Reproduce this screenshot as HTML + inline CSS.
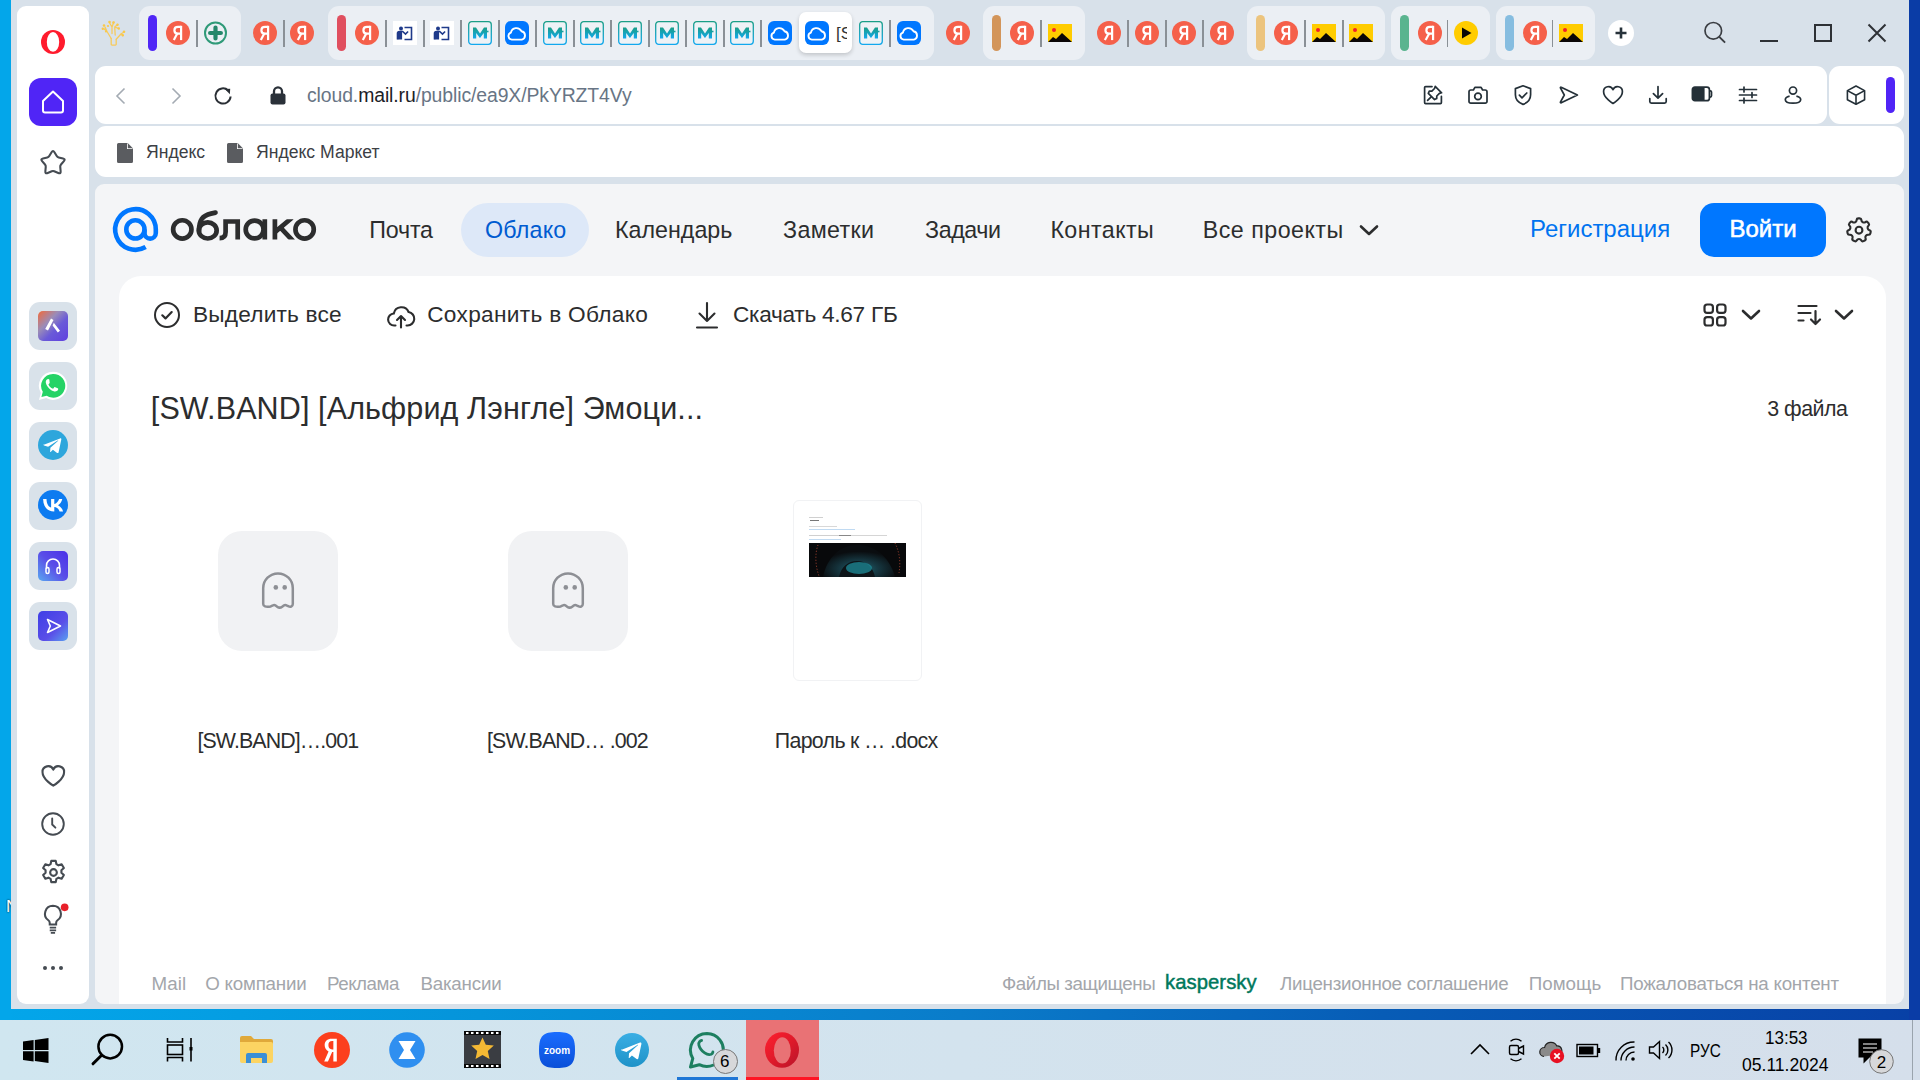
<!DOCTYPE html>
<html><head><meta charset="utf-8">
<style>
*{margin:0;padding:0;box-sizing:border-box}
html,body{width:1920px;height:1080px;overflow:hidden;font-family:"Liberation Sans",sans-serif}
body{position:relative;background:linear-gradient(90deg,#03a6ea 0%,#0594da 25%,#0a7cca 50%,#075cb6 72%,#0840a6 100%)}
.a{position:absolute}
#lwall{left:0;top:0;width:11px;height:1020px;background:#03a6ea}
#rwall{left:1909px;top:0;width:11px;height:1020px;background:#0a3ca6}
#win{left:11px;top:0;width:1898px;height:1009px;background:#d8e1ea}
#side{left:17px;top:6px;width:72px;height:998px;background:#fff;border-radius:9px}
.tile{position:absolute;left:29px;width:48px;height:48px;border-radius:11px;background:#d9e2ea}
.grp{position:absolute;top:6px;height:54px;background:#ebeff4;border-radius:11px}
.bar{position:absolute;top:15px;width:9px;height:36px;border-radius:5px}
.ya{position:absolute;top:21px;width:24px;height:24px;border-radius:50%;background:#f5604a;color:#fff;font:bold 17px/24px "Liberation Sans",sans-serif;text-align:center}
.sep{position:absolute;top:20px;width:2px;height:27px;background:#8a9096}
#addr{left:95px;top:66px;width:1732px;height:58px;background:#fff;border-radius:11px}
#ext{left:1829px;top:66px;width:75px;height:58px;background:#fff;border-radius:11px}
#bm{left:95px;top:126px;width:1809px;height:51px;background:#fff;border-radius:11px}
#page{left:95px;top:184px;width:1809px;height:820px;background:#f4f5f7;border-radius:9px 9px 9px 9px;overflow:hidden}
#card{left:24px;top:92px;width:1767px;height:760px;background:#fff;border-radius:22px 22px 0 0}
#task{left:0;top:1020px;width:1920px;height:60px;background:linear-gradient(90deg,#d0e6f0,#d3e3ee 50%,#d5dfeb)}
.t{position:absolute;white-space:nowrap}
.ic{position:absolute;top:21px}
.nav{top:216.5px;font-size:22.8px;color:#2c2d2e}
.tb{top:302px;font-size:22px;color:#2c2d2e}
.fl{top:729px;font-size:19.85px;color:#2c2d2e}
.ft{top:972px;font-size:18.6px;color:#a3a6ab}
.act{position:absolute;left:799px;top:12px;width:53px;height:41px;background:#fff;border-radius:7px;box-shadow:0 2px 4px rgba(0,0,0,.18)}
</style></head><body>
<div id="lwall" class="a"></div>
<div id="rwall" class="a"></div>
<div id="win" class="a"></div>
<div id="side" class="a"></div>
<!-- opera logo -->
<svg class="a" style="left:41px;top:30px" width="24" height="24" viewBox="0 0 24 24"><ellipse cx="12" cy="12" rx="12" ry="12" fill="#ff1b2d"/><ellipse cx="12" cy="11.9" rx="6.2" ry="9.9" fill="#fff"/></svg>
<!-- home -->
<div class="a" style="left:29px;top:78px;width:48px;height:48px;border-radius:12px;background:#5025f6"></div>
<svg class="a" style="left:41px;top:90px" width="24" height="24" viewBox="0 0 24 24"><path d="M12 1.5l-10 9.4v9.5a2 2 0 0 0 2 2h16a2 2 0 0 0 2-2v-9.5z" fill="none" stroke="#fff" stroke-width="2" stroke-linejoin="round"/></svg>
<!-- star -->
<svg class="a" style="left:39px;top:148px" width="28" height="30" viewBox="0 0 28 30"><path d="M12.56 4.20Q14.00 1.80 15.44 4.20L17.74 8.02Q18.41 9.13 19.67 9.43L24.02 10.43Q26.74 11.06 24.91 13.17L21.99 16.54Q21.13 17.52 21.25 18.81L21.63 23.25Q21.88 26.04 19.30 24.95L15.20 23.21Q14.00 22.70 12.80 23.21L8.70 24.95Q6.12 26.04 6.37 23.25L6.75 18.81Q6.87 17.52 6.01 16.54L3.09 13.17Q1.26 11.06 3.98 10.43L8.33 9.43Q9.59 9.13 10.26 8.02Z" fill="none" stroke="#454b52" stroke-width="2.1" stroke-linejoin="round"/></svg>
<!-- app tiles -->
<div class="tile" style="top:302px"></div>
<div class="tile" style="top:362px"></div>
<div class="tile" style="top:422px"></div>
<div class="tile" style="top:482px"></div>
<div class="tile" style="top:542px"></div>
<div class="tile" style="top:602px"></div>
<svg class="a" style="left:38px;top:311px" width="30" height="30" viewBox="0 0 30 30"><defs><linearGradient id="ag1" x1="0" y1="0" x2="1" y2="1"><stop offset="0" stop-color="#f26a3a"/><stop offset=".35" stop-color="#9a8cb8"/><stop offset=".6" stop-color="#6a5ad8"/><stop offset="1" stop-color="#6040e0"/></linearGradient></defs><rect width="30" height="30" rx="5" fill="url(#ag1)"/><path d="M13 7.5l2.5 1.5-5.5 10.5-2.8-1.4z M15.8 11.8l6.2 8-2.2 1.8-5.2-7.2z" fill="#fff"/></svg>
<svg class="a" style="left:36px;top:369px" width="34" height="34" viewBox="0 0 32 32"><path d="M16 2.5A13.3 13.3 0 0 0 4.6 22.6L2.8 29.2l6.8-1.8A13.3 13.3 0 1 0 16 2.5z" fill="#fff"/><path d="M16 4.6A11.2 11.2 0 0 0 6.4 21.5l-1.3 4.9 5-1.3A11.2 11.2 0 1 0 16 4.6z" fill="#25d366"/><path d="M11.6 9.4c-.5 0-1.2.2-1.6.8-.5.6-1 1.6-.7 3 .6 2.4 2.4 4.8 4.8 6.5 2.2 1.5 4.2 1.6 5.4 1.1.8-.4 1.3-1.2 1.4-1.8.1-.4-.2-.6-.5-.8l-2.3-1.1c-.4-.2-.7-.1-1 .2l-.8 1c-.2.2-.5.3-.8.1-1.5-.7-3-2.1-3.7-3.6-.1-.3 0-.5.2-.7l.7-.8c.2-.3.3-.6.1-.9L12.6 10c-.2-.4-.5-.6-1-.6z" fill="#fff"/></svg>
<svg class="a" style="left:38px;top:430px" width="30" height="30" viewBox="0 0 30 30"><circle cx="15" cy="15" r="15" fill="#2ea6dc"/><path d="M6.5 14.6l15.6-6.2c.7-.3 1.4.2 1.2 1.2l-2.7 12.6c-.2.9-.8 1.1-1.5.7l-4.2-3.1-2 2c-.2.2-.4.3-.8.3l.3-4.3 7.8-7c.3-.3-.1-.5-.5-.2L10.1 16.7 6 15.4c-.9-.3-.9-.9.5-.8z" fill="#fff"/></svg>
<svg class="a" style="left:38px;top:490px" width="30" height="30" viewBox="0 0 30 30"><circle cx="15" cy="15" r="15" fill="#0d7bf0"/><path d="M16 21.4c-6.8 0-10.7-4.7-10.9-12.4h3.4c.1 5.7 2.6 8.1 4.6 8.6V9h3.2v4.9c2-.2 4-2.5 4.8-4.9h3.2c-.5 3-2.7 5.3-4.3 6.2 1.6.8 4.1 2.7 5.1 6.2h-3.5c-.8-2.4-2.7-4.2-5.3-4.4v4.4z" fill="#fff"/></svg>
<svg class="a" style="left:38px;top:551px" width="30" height="30" viewBox="0 0 30 30"><defs><linearGradient id="ag2" x1="0" y1="1" x2="1" y2="0"><stop offset="0" stop-color="#5aa8f0"/><stop offset=".5" stop-color="#5a4ee8"/><stop offset="1" stop-color="#4a30e8"/></linearGradient></defs><rect width="30" height="30" rx="5" fill="url(#ag2)"/><path d="M8.5 18v-3.5a6.5 6.5 0 0 1 13 0V18" fill="none" stroke="#fff" stroke-width="1.6"/><rect x="8" y="16.5" width="3" height="6" rx="1.5" fill="none" stroke="#fff" stroke-width="1.5"/><rect x="19" y="16.5" width="3" height="6" rx="1.5" fill="none" stroke="#fff" stroke-width="1.5"/></svg>
<svg class="a" style="left:38px;top:611px" width="30" height="30" viewBox="0 0 30 30"><defs><linearGradient id="ag3" x1="0" y1="0" x2="1" y2="1"><stop offset="0" stop-color="#3f3fe6"/><stop offset=".6" stop-color="#5a4ee8"/><stop offset="1" stop-color="#5aa0f0"/></linearGradient></defs><rect width="30" height="30" rx="5" fill="url(#ag3)"/><path d="M9.5 8.5l13 6.5-13 6.5 2.8-6.5z" fill="none" stroke="#fff" stroke-width="1.6" stroke-linejoin="round"/></svg>
<!-- bottom icons -->
<svg class="a" style="left:38.8px;top:761.8px" width="28.6" height="28.6" viewBox="0 0 26 26"><path d="M13 21.5S3.2 15.8 3.2 9.3A5.1 5.1 0 0 1 13 7a5.1 5.1 0 0 1 9.8 2.3C22.8 15.8 13 21.5 13 21.5z" fill="none" stroke="#454b52" stroke-width="1.9" stroke-linejoin="round"/></svg>
<svg class="a" style="left:40px;top:811px" width="26" height="26" viewBox="0 0 26 26"><circle cx="13" cy="13" r="10.8" fill="none" stroke="#454b52" stroke-width="1.9"/><path d="M12.2 7.5v6l3.2 3.2" fill="none" stroke="#454b52" stroke-width="1.9" stroke-linecap="round"/></svg>
<svg class="a" style="left:38.5px;top:857.5px" width="29" height="29" viewBox="0 0 26 26"><path d="M11 2.6h4l.6 2.9 1.9 1.1 2.8-1 2 3.4-2.2 2v2.2l2.2 2-2 3.4-2.8-1-1.9 1.1-.6 2.9h-4l-.6-2.9-1.9-1.1-2.8 1-2-3.4 2.2-2V11l-2.2-2 2-3.4 2.8 1 1.9-1.1z" fill="none" stroke="#454b52" stroke-width="1.9" stroke-linejoin="round"/><circle cx="13" cy="13" r="3" fill="none" stroke="#454b52" stroke-width="1.9"/></svg>
<svg class="a" style="left:39px;top:902px" width="30" height="32" viewBox="0 0 28 30"><path d="M13 3.5a7.5 7.5 0 0 0-4.3 13.6c.8.6 1.3 1.5 1.3 2.5v1.4h6v-1.4c0-1 .5-1.9 1.3-2.5A7.5 7.5 0 0 0 13 3.5z" fill="none" stroke="#454b52" stroke-width="1.9"/><path d="M10 24h6M10 26.6h6M11 29h4" stroke="#454b52" stroke-width="1.7"/><circle cx="24" cy="5" r="3.6" fill="#e8202a"/></svg>
<div class="a" style="left:43px;top:966px;width:4.2px;height:4.2px;border-radius:50%;background:#454b52"></div>
<div class="a" style="left:50.9px;top:966px;width:4.2px;height:4.2px;border-radius:50%;background:#454b52"></div>
<div class="a" style="left:58.8px;top:966px;width:4.2px;height:4.2px;border-radius:50%;background:#454b52"></div>

<div class="t" style="left:6px;top:897px;width:5px;overflow:hidden;font-size:17px;color:#fff;text-shadow:0 0 2px #000">N</div>
<svg class="ic" style="left:98px;top:16px" width="32" height="34" viewBox="0 0 32 34"><g fill="none" stroke="#f7ca5c" stroke-width="1.3" stroke-linecap="round" stroke-linejoin="round"><path d="M13.2 22.5v5.8a.8.8 0 0 0 .8.8h3.4a.8.8 0 0 0 .8-.8v-5"/><path d="M13.2 22.5L9 15.5M18.2 23.3l5-5.6M14 17.5V11M17.2 19l-.5-8M9 15.5l-3-2.8M9 15.5L7 11M23.2 17.7l2.6-1.4M23.2 17.7l1.6 1.8M14 11l-2.4-4M14 11l1.8-5M16.7 11l3-2.6M16.7 11l3.6 1.4"/></g><g fill="#f9c84a"><circle cx="11.5" cy="6" r="1.3"/><circle cx="15.5" cy="6.5" r="1.3"/><circle cx="19.5" cy="8.8" r="1.2"/><circle cx="6" cy="9.5" r="1.3"/><circle cx="4.8" cy="12.8" r="1.2"/><circle cx="20.8" cy="12.5" r="1.2"/><circle cx="26" cy="15.8" r="1.3"/><circle cx="24.8" cy="19.3" r="1.2"/><circle cx="8" cy="15.5" r="1.1"/><circle cx="10" cy="10" r="1.1"/></g></svg>
<div class="grp" style="left:139px;width:102px"></div>
<div class="bar" style="left:148.0px;background:#5027f6"></div>
<svg class="ic" style="left:166px" width="24" height="24" viewBox="0 0 24 24"><circle cx="12" cy="12" r="12" fill="#f5604a"/><g fill="none" stroke="#fff" stroke-width="2.2"><path d="M15.1 4.8V19.1"/><path d="M15.1 5.9H12C9.5 5.9 8.4 7.5 8.4 9.2 8.4 11.2 9.7 12.6 12 12.6H15.1"/><path d="M11.3 12.6L7.8 19.1"/></g></svg>
<div class="sep" style="left:196px"></div>
<svg class="ic" style="left:204.0px" width="23" height="24" viewBox="0 0 23 24"><circle cx="11.5" cy="12" r="10.5" fill="none" stroke="#2f9a78" stroke-width="2"/><path d="M11.5 6.6v10.8M6.1 12h10.8" stroke="#24876a" stroke-width="4.2" stroke-linecap="round"/></svg>
<svg class="ic" style="left:253px" width="24" height="24" viewBox="0 0 24 24"><circle cx="12" cy="12" r="12" fill="#f5604a"/><g fill="none" stroke="#fff" stroke-width="2.2"><path d="M15.1 4.8V19.1"/><path d="M15.1 5.9H12C9.5 5.9 8.4 7.5 8.4 9.2 8.4 11.2 9.7 12.6 12 12.6H15.1"/><path d="M11.3 12.6L7.8 19.1"/></g></svg>
<div class="sep" style="left:283px"></div>
<svg class="ic" style="left:290px" width="24" height="24" viewBox="0 0 24 24"><circle cx="12" cy="12" r="12" fill="#f5604a"/><g fill="none" stroke="#fff" stroke-width="2.2"><path d="M15.1 4.8V19.1"/><path d="M15.1 5.9H12C9.5 5.9 8.4 7.5 8.4 9.2 8.4 11.2 9.7 12.6 12 12.6H15.1"/><path d="M11.3 12.6L7.8 19.1"/></g></svg>
<div class="grp" style="left:328px;width:606px"></div>
<div class="bar" style="left:337.0px;background:#e04f5f"></div>
<svg class="ic" style="left:355px" width="24" height="24" viewBox="0 0 24 24"><circle cx="12" cy="12" r="12" fill="#f5604a"/><g fill="none" stroke="#fff" stroke-width="2.2"><path d="M15.1 4.8V19.1"/><path d="M15.1 5.9H12C9.5 5.9 8.4 7.5 8.4 9.2 8.4 11.2 9.7 12.6 12 12.6H15.1"/><path d="M11.3 12.6L7.8 19.1"/></g></svg>
<div class="sep" style="left:385px"></div>
<svg class="ic" style="left:393px" width="24" height="24" viewBox="0 0 24 24"><rect width="24" height="24" fill="#fff"/><circle cx="8" cy="7.5" r="2" fill="#1f3a8a"/><path d="M4.5 18.5v-6a2 2 0 0 1 2-2h3.2l2.8 2.6 2.6-2.6" fill="none" stroke="#1f3a8a" stroke-width="1.6"/><path d="M4.6 11h4.5v7.5H4.6z" fill="#1f3a8a"/><path d="M11.5 6.5h7v12h-7" fill="none" stroke="#1f3a8a" stroke-width="1.6"/></svg>
<div class="sep" style="left:423px"></div>
<svg class="ic" style="left:430px" width="24" height="24" viewBox="0 0 24 24"><rect width="24" height="24" fill="#fff"/><circle cx="8" cy="7.5" r="2" fill="#1f3a8a"/><path d="M4.5 18.5v-6a2 2 0 0 1 2-2h3.2l2.8 2.6 2.6-2.6" fill="none" stroke="#1f3a8a" stroke-width="1.6"/><path d="M4.6 11h4.5v7.5H4.6z" fill="#1f3a8a"/><path d="M11.5 6.5h7v12h-7" fill="none" stroke="#1f3a8a" stroke-width="1.6"/></svg>
<div class="sep" style="left:460px"></div>
<svg class="ic" style="left:468px" width="24" height="24" viewBox="0 0 24 24"><defs><linearGradient id="mg480" x1="0" y1="0" x2="0" y2="1"><stop offset="0" stop-color="#1a9e86"/><stop offset="1" stop-color="#12a8ee"/></linearGradient></defs><rect x=".7" y=".7" width="22.6" height="22.6" rx="3" fill="#eef2f6" stroke="url(#mg480)" stroke-width="1.3"/><path d="M5 17.5V6.5h3l4 6 4-6h3v11h-3.2v-5.5l-3.8 5h-.1l-3.7-5v5.5z" fill="url(#mg480)"/><path d="M15.5 10.5h5" stroke="#1aa0a0" stroke-width="1.6"/></svg>
<div class="sep" style="left:498px"></div>
<svg class="ic" style="left:505px" width="24" height="24" viewBox="0 0 24 24"><rect width="24" height="24" rx="6" fill="#0077ff"/><path d="M6.8 18.6A3.6 3.6 0 0 1 5.9 11.6A5.6 5.6 0 0 1 16.4 10.2A4.3 4.3 0 0 1 16.8 18.6Z" fill="none" stroke="#fff" stroke-width="1.9" stroke-linejoin="round"/></svg>
<div class="sep" style="left:535px"></div>
<svg class="ic" style="left:543px" width="24" height="24" viewBox="0 0 24 24"><defs><linearGradient id="mg555" x1="0" y1="0" x2="0" y2="1"><stop offset="0" stop-color="#1a9e86"/><stop offset="1" stop-color="#12a8ee"/></linearGradient></defs><rect x=".7" y=".7" width="22.6" height="22.6" rx="3" fill="#eef2f6" stroke="url(#mg555)" stroke-width="1.3"/><path d="M5 17.5V6.5h3l4 6 4-6h3v11h-3.2v-5.5l-3.8 5h-.1l-3.7-5v5.5z" fill="url(#mg555)"/><path d="M15.5 10.5h5" stroke="#1aa0a0" stroke-width="1.6"/></svg>
<div class="sep" style="left:573px"></div>
<svg class="ic" style="left:580px" width="24" height="24" viewBox="0 0 24 24"><defs><linearGradient id="mg592" x1="0" y1="0" x2="0" y2="1"><stop offset="0" stop-color="#1a9e86"/><stop offset="1" stop-color="#12a8ee"/></linearGradient></defs><rect x=".7" y=".7" width="22.6" height="22.6" rx="3" fill="#eef2f6" stroke="url(#mg592)" stroke-width="1.3"/><path d="M5 17.5V6.5h3l4 6 4-6h3v11h-3.2v-5.5l-3.8 5h-.1l-3.7-5v5.5z" fill="url(#mg592)"/><path d="M15.5 10.5h5" stroke="#1aa0a0" stroke-width="1.6"/></svg>
<div class="sep" style="left:610px"></div>
<svg class="ic" style="left:618px" width="24" height="24" viewBox="0 0 24 24"><defs><linearGradient id="mg630" x1="0" y1="0" x2="0" y2="1"><stop offset="0" stop-color="#1a9e86"/><stop offset="1" stop-color="#12a8ee"/></linearGradient></defs><rect x=".7" y=".7" width="22.6" height="22.6" rx="3" fill="#eef2f6" stroke="url(#mg630)" stroke-width="1.3"/><path d="M5 17.5V6.5h3l4 6 4-6h3v11h-3.2v-5.5l-3.8 5h-.1l-3.7-5v5.5z" fill="url(#mg630)"/><path d="M15.5 10.5h5" stroke="#1aa0a0" stroke-width="1.6"/></svg>
<div class="sep" style="left:648px"></div>
<svg class="ic" style="left:655px" width="24" height="24" viewBox="0 0 24 24"><defs><linearGradient id="mg667" x1="0" y1="0" x2="0" y2="1"><stop offset="0" stop-color="#1a9e86"/><stop offset="1" stop-color="#12a8ee"/></linearGradient></defs><rect x=".7" y=".7" width="22.6" height="22.6" rx="3" fill="#eef2f6" stroke="url(#mg667)" stroke-width="1.3"/><path d="M5 17.5V6.5h3l4 6 4-6h3v11h-3.2v-5.5l-3.8 5h-.1l-3.7-5v5.5z" fill="url(#mg667)"/><path d="M15.5 10.5h5" stroke="#1aa0a0" stroke-width="1.6"/></svg>
<div class="sep" style="left:685px"></div>
<svg class="ic" style="left:693px" width="24" height="24" viewBox="0 0 24 24"><defs><linearGradient id="mg705" x1="0" y1="0" x2="0" y2="1"><stop offset="0" stop-color="#1a9e86"/><stop offset="1" stop-color="#12a8ee"/></linearGradient></defs><rect x=".7" y=".7" width="22.6" height="22.6" rx="3" fill="#eef2f6" stroke="url(#mg705)" stroke-width="1.3"/><path d="M5 17.5V6.5h3l4 6 4-6h3v11h-3.2v-5.5l-3.8 5h-.1l-3.7-5v5.5z" fill="url(#mg705)"/><path d="M15.5 10.5h5" stroke="#1aa0a0" stroke-width="1.6"/></svg>
<div class="sep" style="left:723px"></div>
<svg class="ic" style="left:730px" width="24" height="24" viewBox="0 0 24 24"><defs><linearGradient id="mg742" x1="0" y1="0" x2="0" y2="1"><stop offset="0" stop-color="#1a9e86"/><stop offset="1" stop-color="#12a8ee"/></linearGradient></defs><rect x=".7" y=".7" width="22.6" height="22.6" rx="3" fill="#eef2f6" stroke="url(#mg742)" stroke-width="1.3"/><path d="M5 17.5V6.5h3l4 6 4-6h3v11h-3.2v-5.5l-3.8 5h-.1l-3.7-5v5.5z" fill="url(#mg742)"/><path d="M15.5 10.5h5" stroke="#1aa0a0" stroke-width="1.6"/></svg>
<div class="sep" style="left:760px"></div>
<svg class="ic" style="left:768px" width="24" height="24" viewBox="0 0 24 24"><rect width="24" height="24" rx="6" fill="#0077ff"/><path d="M6.8 18.6A3.6 3.6 0 0 1 5.9 11.6A5.6 5.6 0 0 1 16.4 10.2A4.3 4.3 0 0 1 16.8 18.6Z" fill="none" stroke="#fff" stroke-width="1.9" stroke-linejoin="round"/></svg>
<div class="act"></div>
<svg class="ic" style="left:805px" width="24" height="24" viewBox="0 0 24 24"><rect width="24" height="24" rx="6" fill="#0077ff"/><path d="M6.8 18.6A3.6 3.6 0 0 1 5.9 11.6A5.6 5.6 0 0 1 16.4 10.2A4.3 4.3 0 0 1 16.8 18.6Z" fill="none" stroke="#fff" stroke-width="1.9" stroke-linejoin="round"/></svg>
<div class="t" style="left:836px;top:24px;width:11px;overflow:hidden;font-size:17px;color:#333">[S</div>
<svg class="ic" style="left:859px" width="24" height="24" viewBox="0 0 24 24"><defs><linearGradient id="mg871" x1="0" y1="0" x2="0" y2="1"><stop offset="0" stop-color="#1a9e86"/><stop offset="1" stop-color="#12a8ee"/></linearGradient></defs><rect x=".7" y=".7" width="22.6" height="22.6" rx="3" fill="#eef2f6" stroke="url(#mg871)" stroke-width="1.3"/><path d="M5 17.5V6.5h3l4 6 4-6h3v11h-3.2v-5.5l-3.8 5h-.1l-3.7-5v5.5z" fill="url(#mg871)"/><path d="M15.5 10.5h5" stroke="#1aa0a0" stroke-width="1.6"/></svg>
<div class="sep" style="left:889px"></div>
<svg class="ic" style="left:897px" width="24" height="24" viewBox="0 0 24 24"><rect width="24" height="24" rx="6" fill="#0077ff"/><path d="M6.8 18.6A3.6 3.6 0 0 1 5.9 11.6A5.6 5.6 0 0 1 16.4 10.2A4.3 4.3 0 0 1 16.8 18.6Z" fill="none" stroke="#fff" stroke-width="1.9" stroke-linejoin="round"/></svg>
<svg class="ic" style="left:946px" width="24" height="24" viewBox="0 0 24 24"><circle cx="12" cy="12" r="12" fill="#f5604a"/><g fill="none" stroke="#fff" stroke-width="2.2"><path d="M15.1 4.8V19.1"/><path d="M15.1 5.9H12C9.5 5.9 8.4 7.5 8.4 9.2 8.4 11.2 9.7 12.6 12 12.6H15.1"/><path d="M11.3 12.6L7.8 19.1"/></g></svg>
<div class="grp" style="left:983px;width:102px"></div>
<div class="bar" style="left:992.0px;background:#d3955a"></div>
<svg class="ic" style="left:1010px" width="24" height="24" viewBox="0 0 24 24"><circle cx="12" cy="12" r="12" fill="#f5604a"/><g fill="none" stroke="#fff" stroke-width="2.2"><path d="M15.1 4.8V19.1"/><path d="M15.1 5.9H12C9.5 5.9 8.4 7.5 8.4 9.2 8.4 11.2 9.7 12.6 12 12.6H15.1"/><path d="M11.3 12.6L7.8 19.1"/></g></svg>
<div class="sep" style="left:1040px"></div>
<svg class="ic" style="left:1048px;top:24px" width="24" height="18" viewBox="0 0 24 18"><rect width="24" height="18" fill="#ffcc00"/><circle cx="6" cy="6" r="2" fill="#f0202a"/><path d="M0 18l5-5 3 2 6-6 10 9z" fill="#0a0606"/></svg>
<svg class="ic" style="left:1097px" width="24" height="24" viewBox="0 0 24 24"><circle cx="12" cy="12" r="12" fill="#f5604a"/><g fill="none" stroke="#fff" stroke-width="2.2"><path d="M15.1 4.8V19.1"/><path d="M15.1 5.9H12C9.5 5.9 8.4 7.5 8.4 9.2 8.4 11.2 9.7 12.6 12 12.6H15.1"/><path d="M11.3 12.6L7.8 19.1"/></g></svg>
<div class="sep" style="left:1127px"></div>
<svg class="ic" style="left:1135px" width="24" height="24" viewBox="0 0 24 24"><circle cx="12" cy="12" r="12" fill="#f5604a"/><g fill="none" stroke="#fff" stroke-width="2.2"><path d="M15.1 4.8V19.1"/><path d="M15.1 5.9H12C9.5 5.9 8.4 7.5 8.4 9.2 8.4 11.2 9.7 12.6 12 12.6H15.1"/><path d="M11.3 12.6L7.8 19.1"/></g></svg>
<div class="sep" style="left:1165px"></div>
<svg class="ic" style="left:1172px" width="24" height="24" viewBox="0 0 24 24"><circle cx="12" cy="12" r="12" fill="#f5604a"/><g fill="none" stroke="#fff" stroke-width="2.2"><path d="M15.1 4.8V19.1"/><path d="M15.1 5.9H12C9.5 5.9 8.4 7.5 8.4 9.2 8.4 11.2 9.7 12.6 12 12.6H15.1"/><path d="M11.3 12.6L7.8 19.1"/></g></svg>
<div class="sep" style="left:1202px"></div>
<svg class="ic" style="left:1210px" width="24" height="24" viewBox="0 0 24 24"><circle cx="12" cy="12" r="12" fill="#f5604a"/><g fill="none" stroke="#fff" stroke-width="2.2"><path d="M15.1 4.8V19.1"/><path d="M15.1 5.9H12C9.5 5.9 8.4 7.5 8.4 9.2 8.4 11.2 9.7 12.6 12 12.6H15.1"/><path d="M11.3 12.6L7.8 19.1"/></g></svg>
<div class="grp" style="left:1247px;width:138px"></div>
<div class="bar" style="left:1256.0px;background:#ecc47e"></div>
<svg class="ic" style="left:1274px" width="24" height="24" viewBox="0 0 24 24"><circle cx="12" cy="12" r="12" fill="#f5604a"/><g fill="none" stroke="#fff" stroke-width="2.2"><path d="M15.1 4.8V19.1"/><path d="M15.1 5.9H12C9.5 5.9 8.4 7.5 8.4 9.2 8.4 11.2 9.7 12.6 12 12.6H15.1"/><path d="M11.3 12.6L7.8 19.1"/></g></svg>
<div class="sep" style="left:1304px"></div>
<svg class="ic" style="left:1312px;top:24px" width="24" height="18" viewBox="0 0 24 18"><rect width="24" height="18" fill="#ffcc00"/><circle cx="6" cy="6" r="2" fill="#f0202a"/><path d="M0 18l5-5 3 2 6-6 10 9z" fill="#0a0606"/></svg>
<div class="sep" style="left:1342px"></div>
<svg class="ic" style="left:1349px;top:24px" width="24" height="18" viewBox="0 0 24 18"><rect width="24" height="18" fill="#ffcc00"/><circle cx="6" cy="6" r="2" fill="#f0202a"/><path d="M0 18l5-5 3 2 6-6 10 9z" fill="#0a0606"/></svg>
<div class="grp" style="left:1391px;width:99px"></div>
<div class="bar" style="left:1400.0px;background:#5ab48f"></div>
<svg class="ic" style="left:1418px" width="24" height="24" viewBox="0 0 24 24"><circle cx="12" cy="12" r="12" fill="#f5604a"/><g fill="none" stroke="#fff" stroke-width="2.2"><path d="M15.1 4.8V19.1"/><path d="M15.1 5.9H12C9.5 5.9 8.4 7.5 8.4 9.2 8.4 11.2 9.7 12.6 12 12.6H15.1"/><path d="M11.3 12.6L7.8 19.1"/></g></svg>
<div class="sep" style="left:1447px;width:1px"></div>
<svg class="ic" style="left:1454px" width="24" height="24" viewBox="0 0 24 24"><circle cx="12" cy="12" r="12" fill="#ffcc00"/><path d="M8 6.5l9.5 5.5L8 17.5z" fill="#0a0606"/></svg>
<div class="grp" style="left:1496px;width:99px"></div>
<div class="bar" style="left:1505.0px;background:#86bde0"></div>
<svg class="ic" style="left:1523px" width="24" height="24" viewBox="0 0 24 24"><circle cx="12" cy="12" r="12" fill="#f5604a"/><g fill="none" stroke="#fff" stroke-width="2.2"><path d="M15.1 4.8V19.1"/><path d="M15.1 5.9H12C9.5 5.9 8.4 7.5 8.4 9.2 8.4 11.2 9.7 12.6 12 12.6H15.1"/><path d="M11.3 12.6L7.8 19.1"/></g></svg>
<div class="sep" style="left:1552px;width:1px"></div>
<svg class="ic" style="left:1559px;top:24px" width="24" height="18" viewBox="0 0 24 18"><rect width="24" height="18" fill="#ffcc00"/><circle cx="6" cy="6" r="2" fill="#f0202a"/><path d="M0 18l5-5 3 2 6-6 10 9z" fill="#0a0606"/></svg>
<div id="addr" class="a"></div>
<div id="ext" class="a"></div>
<div id="bm" class="a"></div>
<!-- new tab plus -->
<div class="a" style="left:1608px;top:20px;width:26px;height:26px;border-radius:50%;background:#fff"></div>
<svg class="a" style="left:1612px;top:24px" width="18" height="18" viewBox="0 0 18 18"><path d="M9 3.5v11M3.5 9h11" stroke="#27323a" stroke-width="2.6"/></svg>
<!-- search, min, max, close -->
<svg class="a" style="left:1700px;top:18px" width="30" height="30" viewBox="0 0 30 30"><circle cx="13.3" cy="12.8" r="8.3" fill="none" stroke="#3a3d42" stroke-width="1.7"/><path d="M19.3 18.8l5.8 5.8" stroke="#3a3d42" stroke-width="1.9"/></svg>
<div class="a" style="left:1760px;top:40px;width:18px;height:2px;background:#2e3136"></div>
<div class="a" style="left:1814px;top:24px;width:18px;height:18px;border:2px solid #2e3136"></div>
<svg class="a" style="left:1866px;top:22px" width="22" height="22" viewBox="0 0 22 22"><path d="M2.5 2.5l17 17M19.5 2.5l-17 17" stroke="#2e3136" stroke-width="2"/></svg>

<!-- address bar icons -->
<svg class="a" style="left:110px;top:85px" width="22" height="22" viewBox="0 0 22 22"><path d="M14.5 3.5L7 11l7.5 7.5" fill="none" stroke="#a4abb3" stroke-width="1.6"/></svg>
<svg class="a" style="left:165px;top:85px" width="22" height="22" viewBox="0 0 22 22"><path d="M7.5 3.5L15 11l-7.5 7.5" fill="none" stroke="#a4abb3" stroke-width="1.6"/></svg>
<svg class="a" style="left:211px;top:84px" width="24" height="24" viewBox="0 0 24 24"><path d="M19.6 12.5A7.6 7.6 0 1 1 17.2 6.4" fill="none" stroke="#2a2f35" stroke-width="2"/><path d="M13.8 5.1l5.4-.3-.3 5.4z" fill="#2a2f35"/></svg>
<svg class="a" style="left:268px;top:84px" width="20" height="22" viewBox="0 0 20 22"><path d="M6 10V7.3a4 4 0 0 1 8 0V10" fill="none" stroke="#2a3139" stroke-width="2.3"/><rect x="2.5" y="9.5" width="15" height="11" rx="2" fill="#2a3139"/></svg>
<div class="t" style="left:307px;top:84px;font-size:19.4px;color:#687585;letter-spacing:-0.1px">cloud.<span style="color:#1c2127">mail.ru</span>/public/ea9X/PkYRZT4Vy</div>


<svg class="a" style="left:1421px;top:83px" width="24" height="24" viewBox="0 0 24 24" fill="none" stroke="#243038" stroke-width="1.7" stroke-linecap="round" stroke-linejoin="round"><path d="M11 3.6H4.6a1 1 0 0 0-1 1v15a1 1 0 0 0 1 1h14.8a1 1 0 0 0 1-1v-6.2"/><path d="M14.2 3.4l6.4 6.4-2.2.6-2.6 2.6-.1 2.6-2.1 1-6.3-6.3 1-2.1 2.6-.1 2.6-2.6z"/><path d="M10.2 13.8l-3.6 3.6"/></svg>
<svg class="a" style="left:1466px;top:83px" width="24" height="24" viewBox="0 0 24 24" fill="none" stroke="#243038" stroke-width="1.7" stroke-linejoin="round"><path d="M3 8.8a1.8 1.8 0 0 1 1.8-1.8h2.6l1.5-2.6h6.2l1.5 2.6h2.6A1.8 1.8 0 0 1 21 8.8v9.6a1.8 1.8 0 0 1-1.8 1.8H4.8A1.8 1.8 0 0 1 3 18.4z"/><circle cx="12" cy="13.4" r="3.3"/></svg>
<svg class="a" style="left:1511px;top:83px" width="24" height="24" viewBox="0 0 24 24" fill="none" stroke="#243038" stroke-width="1.7" stroke-linejoin="round" stroke-linecap="round"><path d="M12 2.8l7.6 2.8v6.2c0 4.6-3.2 8-7.6 9.6-4.4-1.6-7.6-5-7.6-9.6V5.6z"/><path d="M8.4 12.2l2.6 2.6 4.8-4.8"/></svg>
<svg class="a" style="left:1557px;top:83px" width="24" height="24" viewBox="0 0 24 24" fill="none" stroke="#243038" stroke-width="1.7" stroke-linejoin="round" stroke-linecap="round"><path d="M4.2 4.2c-.5-.3-1 .2-.8.7L7.3 12l-3.9 7.1c-.2.5.3 1 .8.7L20.4 12z"/></svg>
<svg class="a" style="left:1601px;top:83px" width="24" height="24" viewBox="0 0 24 24" fill="none" stroke="#243038" stroke-width="1.7" stroke-linejoin="round"><path d="M12 20.5S2.6 15 2.6 8.8A4.9 4.9 0 0 1 12 6.6a4.9 4.9 0 0 1 9.4 2.2C21.4 15 12 20.5 12 20.5z"/></svg>
<svg class="a" style="left:1646px;top:83px" width="24" height="24" viewBox="0 0 24 24" fill="none" stroke="#243038" stroke-width="1.7" stroke-linecap="round" stroke-linejoin="round"><path d="M12 3.5v11.5M7.4 10.6L12 15.2l4.6-4.6M3.8 15.6v3a1.6 1.6 0 0 0 1.6 1.6h13.2a1.6 1.6 0 0 0 1.6-1.6v-3"/></svg>
<svg class="a" style="left:1690px;top:83px" width="24" height="24" viewBox="0 0 24 24"><path d="M2.4 6.7a2.5 2.5 0 0 1 2.5-2.5h9.7v13.5H4.9a2.5 2.5 0 0 1-2.5-2.5z" fill="#243038"/><rect x="2.4" y="4.2" width="17" height="13.5" rx="2.5" fill="none" stroke="#243038" stroke-width="1.7"/><path d="M19.4 7.8h.8a1.3 1.3 0 0 1 1.3 1.3v3.7a1.3 1.3 0 0 1-1.3 1.3h-.8" fill="none" stroke="#243038" stroke-width="1.7"/></svg>
<svg class="a" style="left:1736px;top:83px" width="24" height="24" viewBox="0 0 24 24" fill="none" stroke="#243038" stroke-width="1.7" stroke-linecap="round"><path d="M3.5 6.5h17M3.5 12h17M3.5 17.5h17M8 4v5M16 9.5v5M8 15v5"/></svg>
<svg class="a" style="left:1781px;top:83px" width="24" height="24" viewBox="0 0 24 24" fill="none" stroke="#243038" stroke-width="1.7"><circle cx="12" cy="7.6" r="3.6"/><path d="M8.6 13.2c-2.6.6-4.3 2-4.3 3.6 0 2 2.4 3.4 7.7 3.4s7.7-1.4 7.7-3.4c0-1.6-1.7-3-4.3-3.6"/></svg>
<svg class="a" style="left:1844px;top:83px" width="24" height="24" viewBox="0 0 24 24" fill="none" stroke="#243038" stroke-width="1.6" stroke-linejoin="round"><path d="M12 3l8.6 4.6v9.2L12 21.2 3.4 16.8V7.6z"/><path d="M3.4 7.6L12 12.2l8.6-4.6M12 12.2v9"/></svg>
<div class="a" style="left:1886px;top:77px;width:9px;height:36px;border-radius:5px;background:#5024f6"></div>

<!-- bookmarks -->
<svg class="a" style="left:117px;top:143px" width="16" height="20" viewBox="0 0 16 20"><path d="M1.5 0h9L16 5.5V18.5A1.5 1.5 0 0 1 14.5 20h-13A1.5 1.5 0 0 1 0 18.5v-17A1.5 1.5 0 0 1 1.5 0z" fill="#5a5c60"/><path d="M10 0v6h6" fill="#fff"/><path d="M10.8 .3v4.9h4.9" fill="#5a5c60"/></svg>
<div class="t" style="left:146px;top:142px;font-size:17.6px;color:#3d4045">Яндекс</div>
<svg class="a" style="left:227px;top:143px" width="16" height="20" viewBox="0 0 16 20"><path d="M1.5 0h9L16 5.5V18.5A1.5 1.5 0 0 1 14.5 20h-13A1.5 1.5 0 0 1 0 18.5v-17A1.5 1.5 0 0 1 1.5 0z" fill="#5a5c60"/><path d="M10 0v6h6" fill="#fff"/><path d="M10.8 .3v4.9h4.9" fill="#5a5c60"/></svg>
<div class="t" style="left:256px;top:142px;font-size:17.6px;color:#3d4045">Яндекс Маркет</div>

<div id="page" class="a">
  <div id="card" class="a"></div>
</div>
<!-- header -->
<svg class="a" style="left:108px;top:202px" width="56" height="56" viewBox="0 0 56 56"><g fill="none" stroke="#0077ff" stroke-width="4.6"><circle cx="27.4" cy="27.4" r="9.1"/><path d="M37.65 45.08A20.3 20.3 0 1 1 47.8 27.5V31A5.65 5.65 0 0 1 36.5 31V27.4"/></g></svg>
<svg class="a" style="left:165px;top:200px" width="160" height="50" viewBox="0 0 160 50"><g fill="none" stroke="#2c2d2e" stroke-width="4.7"><circle cx="17.3" cy="29.4" r="9.15"/><ellipse cx="42.75" cy="30.4" rx="8.9" ry="8.1"/><path d="M34 31C34 20 37.5 15.5 46 13.6L50.5 12.6" stroke-linecap="round"/><path d="M54.6 38.2C58.5 38.2 60.6 36.4 60.6 32V21.5H72.7V39.6"/><circle cx="89.6" cy="29.5" r="8.9"/><defs><clipPath id="kc"><rect x="0" y="19.3" width="160" height="20.3"/></clipPath></defs><path d="M99.8 19.3V39.6M109.9 19.3V39.6"/><path clip-path="url(#kc)" d="M110.5 31.6L127 17.8M115 27.2L128.2 41.2"/><circle cx="139.6" cy="29.4" r="9.15"/></g></svg>
<div class="a" style="left:461px;top:203px;width:128px;height:54px;border-radius:27px;background:#dde8f8"></div>
<svg class="a" style="left:1358px;top:220px" width="22" height="20" viewBox="0 0 22 20"><path d="M3 6.5l8 7.5 8-7.5" fill="none" stroke="#2c2d2e" stroke-width="2.6" stroke-linecap="round" stroke-linejoin="round"/></svg>
<div class="a" style="left:1700px;top:203px;width:126px;height:54px;border-radius:14px;background:#0077ff"></div>
<svg class="a" style="left:1845px;top:215.5px" width="28" height="28" viewBox="0 0 28 28"><path d="M10.19 6.19Q11.53 5.55 11.63 4.06L11.64 3.94Q11.75 2.41 13.28 2.41L14.72 2.41Q16.25 2.41 16.36 3.94L16.37 4.06Q16.47 5.55 17.81 6.19L17.88 6.23Q19.22 6.87 20.45 6.03L20.55 5.96Q21.81 5.09 22.77 6.29L23.66 7.41Q24.62 8.61 23.49 9.65L23.40 9.73Q22.31 10.74 22.64 12.19L22.66 12.26Q22.99 13.72 24.41 14.15L24.53 14.18Q25.99 14.63 25.65 16.12L25.33 17.52Q24.99 19.02 23.48 18.78L23.36 18.76Q21.89 18.54 20.96 19.70L20.91 19.76Q19.98 20.92 20.53 22.31L20.58 22.42Q21.14 23.84 19.76 24.51L18.47 25.13Q17.09 25.80 16.33 24.47L16.27 24.36Q15.53 23.07 14.04 23.07L13.96 23.07Q12.47 23.07 11.73 24.36L11.67 24.47Q10.91 25.80 9.53 25.13L8.24 24.51Q6.86 23.84 7.42 22.42L7.47 22.31Q8.02 20.92 7.09 19.76L7.04 19.70Q6.11 18.54 4.64 18.76L4.52 18.78Q3.01 19.02 2.67 17.52L2.35 16.12Q2.01 14.63 3.47 14.18L3.59 14.15Q5.01 13.72 5.34 12.26L5.36 12.19Q5.69 10.74 4.60 9.73L4.51 9.65Q3.38 8.61 4.34 7.41L5.23 6.29Q6.19 5.09 7.45 5.96L7.55 6.03Q8.78 6.87 10.12 6.23Z" fill="none" stroke="#2c2d2e" stroke-width="2.1" stroke-linejoin="round"/><circle cx="14" cy="14.2" r="3.4" fill="none" stroke="#2c2d2e" stroke-width="2.1"/></svg>

<!-- toolbar -->
<svg class="a" style="left:153px;top:301px" width="28" height="28" viewBox="0 0 28 28"><circle cx="14" cy="14" r="12" fill="none" stroke="#2c2d2e" stroke-width="2"/><path d="M9.3 14.3l3.2 3.1 6.2-6.3" fill="none" stroke="#2c2d2e" stroke-width="2.2" stroke-linecap="round" stroke-linejoin="round"/></svg>
<svg class="a" style="left:386px;top:302px" width="30" height="28" viewBox="0 0 30 28"><path d="M9.5 23.5H8.4a6 6 0 0 1-.6-12A7.8 7.8 0 0 1 22.6 10a6.8 6.8 0 0 1-1 13.5h-1.1" fill="none" stroke="#2c2d2e" stroke-width="2.1" stroke-linecap="round"/><path d="M15 25.5v-11M11 18l4-4 4 4" fill="none" stroke="#2c2d2e" stroke-width="2.1" stroke-linecap="round" stroke-linejoin="round"/></svg>
<svg class="a" style="left:694px;top:300px" width="26" height="30" viewBox="0 0 26 30"><path d="M13 3v18M5.5 13.5L13 21l7.5-7.5M3 27.5h20" fill="none" stroke="#2c2d2e" stroke-width="2.1" stroke-linecap="round" stroke-linejoin="round"/></svg>
<svg class="a" style="left:1701px;top:301px" width="28" height="28" viewBox="0 0 28 28"><g fill="none" stroke="#2c2d2e" stroke-width="2.2"><rect x="3.5" y="3.5" width="8.4" height="8.4" rx="2.6"/><rect x="16.1" y="3.5" width="8.4" height="8.4" rx="2.6"/><rect x="3.5" y="16.1" width="8.4" height="8.4" rx="2.6"/><rect x="16.1" y="16.1" width="8.4" height="8.4" rx="2.6"/></g></svg>
<svg class="a" style="left:1740px;top:305px" width="22" height="20" viewBox="0 0 22 20"><path d="M3 6l8 7.5L19 6" fill="none" stroke="#2c2d2e" stroke-width="2.6" stroke-linecap="round" stroke-linejoin="round"/></svg>
<svg class="a" style="left:1795px;top:302px" width="28" height="24" viewBox="0 0 28 24"><path d="M3.5 4h18M3.5 11h12M3.5 18.5h5M20.5 9v12.5M16 17.5l4.5 4.5 4.5-4.5" fill="none" stroke="#2c2d2e" stroke-width="2.2" stroke-linecap="round" stroke-linejoin="round"/></svg>
<svg class="a" style="left:1833px;top:305px" width="22" height="20" viewBox="0 0 22 20"><path d="M3 6l8 7.5L19 6" fill="none" stroke="#2c2d2e" stroke-width="2.6" stroke-linecap="round" stroke-linejoin="round"/></svg>

<!-- title -->

<!-- files -->
<div class="a" style="left:218px;top:531px;width:120px;height:120px;border-radius:24px;background:#f1f2f4"></div>
<div class="a" style="left:508px;top:531px;width:120px;height:120px;border-radius:24px;background:#f1f2f4"></div>
<svg class="a" style="left:260px;top:571px" width="36" height="40" viewBox="0 0 36 40"><path d="M3.2 33V17.2a14.8 14.8 0 0 1 29.6 0V33c0 2.2-2.3 3.3-4.1 2.4l-2.2-1.1c-.9-.5-1.9-.4-2.7.2l-1.6 1.2c-1.5 1.1-3.6 1.1-5 0l-1.6-1.2c-.8-.6-1.8-.7-2.7-.2l-2.2 1.1C5.5 36.3 3.2 35.2 3.2 33z" fill="none" stroke="#8d8f94" stroke-width="2.5" stroke-linejoin="round"/><circle cx="15.8" cy="16.4" r="2.3" fill="#8d8f94"/><circle cx="24.7" cy="16.4" r="2.3" fill="#8d8f94"/></svg>
<svg class="a" style="left:550px;top:571px" width="36" height="40" viewBox="0 0 36 40"><path d="M3.2 33V17.2a14.8 14.8 0 0 1 29.6 0V33c0 2.2-2.3 3.3-4.1 2.4l-2.2-1.1c-.9-.5-1.9-.4-2.7.2l-1.6 1.2c-1.5 1.1-3.6 1.1-5 0l-1.6-1.2c-.8-.6-1.8-.7-2.7-.2l-2.2 1.1C5.5 36.3 3.2 35.2 3.2 33z" fill="none" stroke="#8d8f94" stroke-width="2.5" stroke-linejoin="round"/><circle cx="15.8" cy="16.4" r="2.3" fill="#8d8f94"/><circle cx="24.7" cy="16.4" r="2.3" fill="#8d8f94"/></svg>
<!-- doc thumbnail -->
<div class="a" style="left:793px;top:500px;width:129px;height:181px;border-radius:6px;border:1px solid #f1f2f4;background:#fff"></div>
<div class="a" style="left:809px;top:517px;width:14px;height:1px;background:#d0d0d0"></div>
<div class="a" style="left:810px;top:520px;width:9px;height:1.2px;background:#777"></div>
<div class="a" style="left:809px;top:526px;width:28px;height:1px;background:#d8d8d8"></div>
<div class="a" style="left:809px;top:529px;width:46px;height:1px;background:#c0daf2"></div>
<div class="a" style="left:809px;top:535px;width:30px;height:1px;background:#d0d0d0"></div>
<div class="a" style="left:839px;top:535px;width:12px;height:1.2px;background:#888"></div>
<div class="a" style="left:851px;top:535px;width:36px;height:1px;background:#d5d5d5"></div>
<div class="a" style="left:809px;top:539px;width:32px;height:1px;background:#c0daf2"></div>
<svg class="a" style="left:809px;top:543px" width="97" height="34" viewBox="0 0 97 34"><defs><radialGradient id="face" cx=".5" cy=".75" r=".55"><stop offset="0" stop-color="#1f6f78"/><stop offset=".45" stop-color="#173a44"/><stop offset="1" stop-color="#0a0d10"/></radialGradient></defs><rect width="97" height="34" fill="#08090b"/><path d="M14 34C18 14 32 2 48 2s32 10 38 32z" fill="url(#face)"/><path d="M30 34c2-10 9-16 18-16s16 6 18 16z" fill="#0d1418"/><ellipse cx="50" cy="25" rx="13" ry="6" fill="#1d8c9a" opacity=".75"/><path d="M9 2C6 10 6 22 10 33M86 0c4 8 6 18 4 30" stroke="#a2412e" stroke-width="1" stroke-dasharray="1 2" fill="none"/></svg>


<!-- footer -->
<div class="t" style="left:1165px;top:972px;font-size:20.3px;line-height:20.3px;color:#00785c;letter-spacing:0.05px;-webkit-text-stroke:0.45px #00785c">kaspersky</div>

<div class="t" style="left:369.20px;top:218.81px;font-size:23.26px;line-height:23.26px;letter-spacing:-0.175px;font-weight:normal;color:#2c2d2e;">Почта</div>
<div class="t" style="left:485.00px;top:218.81px;font-size:23.26px;line-height:23.26px;letter-spacing:0.200px;font-weight:normal;color:#005bd1;">Облако</div>
<div class="t" style="left:615.00px;top:218.81px;font-size:23.26px;line-height:23.26px;letter-spacing:0.000px;font-weight:normal;color:#2c2d2e;">Календарь</div>
<div class="t" style="left:783.00px;top:218.81px;font-size:23.26px;line-height:23.26px;letter-spacing:0.333px;font-weight:normal;color:#2c2d2e;">Заметки</div>
<div class="t" style="left:925.00px;top:218.81px;font-size:23.26px;line-height:23.26px;letter-spacing:-0.400px;font-weight:normal;color:#2c2d2e;">Задачи</div>
<div class="t" style="left:1050.40px;top:218.81px;font-size:23.26px;line-height:23.26px;letter-spacing:0.429px;font-weight:normal;color:#2c2d2e;">Контакты</div>
<div class="t" style="left:1202.80px;top:218.81px;font-size:23.26px;line-height:23.26px;letter-spacing:0.470px;font-weight:normal;color:#2c2d2e;">Все проекты</div>
<div class="t" style="left:1530.00px;top:217.49px;font-size:23.98px;line-height:23.98px;letter-spacing:0.000px;font-weight:normal;color:#0073f0;">Регистрация</div>
<div class="t" style="left:1729.40px;top:217.49px;font-size:23.98px;line-height:23.98px;letter-spacing:0.075px;font-weight:normal;color:#ffffff;-webkit-text-stroke:0.55px #ffffff">Войти</div>
<div class="t" style="left:193.00px;top:302.80px;font-size:22.67px;line-height:22.67px;letter-spacing:0.191px;font-weight:normal;color:#2c2d2e;">Выделить все</div>
<div class="t" style="left:427.20px;top:302.80px;font-size:22.67px;line-height:22.67px;letter-spacing:0.306px;font-weight:normal;color:#2c2d2e;">Сохранить в Облако</div>
<div class="t" style="left:733.00px;top:302.80px;font-size:22.67px;line-height:22.67px;letter-spacing:-0.286px;font-weight:normal;color:#2c2d2e;">Скачать 4.67 ГБ</div>
<div class="t" style="left:150.80px;top:393.46px;font-size:30.52px;line-height:30.52px;letter-spacing:0.115px;font-weight:normal;color:#2c2d2e;">[SW.BAND] [Альфрид Лэнгле] Эмоци...</div>
<div class="t" style="left:1767.20px;top:398.98px;font-size:21.40px;line-height:21.40px;letter-spacing:-0.483px;font-weight:normal;color:#2c2d2e;">3 файла</div>
<div class="t" style="left:197.40px;top:730.91px;font-size:21.37px;line-height:21.37px;letter-spacing:-0.892px;font-weight:normal;color:#2c2d2e;">[SW.BAND]….001</div>
<div class="t" style="left:487.00px;top:730.91px;font-size:21.37px;line-height:21.37px;letter-spacing:-0.892px;font-weight:normal;color:#2c2d2e;">[SW.BAND… .002</div>
<div class="t" style="left:774.80px;top:730.91px;font-size:21.37px;line-height:21.37px;letter-spacing:-0.680px;font-weight:normal;color:#2c2d2e;">Пароль к … .docx</div>
<div class="t" style="left:151.60px;top:974.52px;font-size:18.75px;line-height:18.75px;letter-spacing:0.033px;font-weight:normal;color:#a3a6ab;">Mail</div>
<div class="t" style="left:205.20px;top:974.52px;font-size:18.75px;line-height:18.75px;letter-spacing:-0.211px;font-weight:normal;color:#a3a6ab;">О компании</div>
<div class="t" style="left:327.00px;top:974.52px;font-size:18.75px;line-height:18.75px;letter-spacing:-0.467px;font-weight:normal;color:#a3a6ab;">Реклама</div>
<div class="t" style="left:420.40px;top:974.52px;font-size:18.75px;line-height:18.75px;letter-spacing:-0.200px;font-weight:normal;color:#a3a6ab;">Вакансии</div>
<div class="t" style="left:1002.00px;top:974.52px;font-size:18.75px;line-height:18.75px;letter-spacing:-0.423px;font-weight:normal;color:#a3a6ab;">Файлы защищены</div>
<div class="t" style="left:1280.00px;top:974.52px;font-size:18.75px;line-height:18.75px;letter-spacing:-0.282px;font-weight:normal;color:#a3a6ab;">Лицензионное соглашение</div>
<div class="t" style="left:1528.80px;top:974.52px;font-size:18.75px;line-height:18.75px;letter-spacing:0.000px;font-weight:normal;color:#a3a6ab;">Помощь</div>
<div class="t" style="left:1620.00px;top:974.52px;font-size:18.75px;line-height:18.75px;letter-spacing:-0.227px;font-weight:normal;color:#a3a6ab;">Пожаловаться на контент</div>

<div id="task" class="a"></div>
<!-- windows logo -->
<svg class="a" style="left:23px;top:1038px" width="26" height="25" viewBox="0 0 26 25"><path d="M0 3.6l10.6-1.5v10H0zM11.8 1.9L25.5 0v12.1H11.8zM0 13.3h10.6v10.1L0 21.9zM11.8 13.3h13.7V25l-13.7-1.9z" fill="#000"/></svg>
<!-- search -->
<svg class="a" style="left:90px;top:1031px" width="38" height="38" viewBox="0 0 38 38"><circle cx="20.2" cy="15.6" r="11.8" fill="none" stroke="#000" stroke-width="2.5"/><path d="M11.6 24.2L3 32.8" stroke="#000" stroke-width="3" stroke-linecap="round"/></svg>
<!-- task view -->
<svg class="a" style="left:166px;top:1037px" width="28" height="26" viewBox="0 0 28 26"><g fill="none" stroke="#000" stroke-width="1.6"><path d="M1.5 1v4h15V1M1.5 24.5v-4h15v4"/><rect x="1.5" y="8" width="15" height="9.5"/><path d="M25 1v23.5"/></g><rect x="23.5" y="10" width="3" height="3.5" fill="#000"/></svg>
<!-- explorer -->
<svg class="a" style="left:240px;top:1036px" width="33" height="28" viewBox="0 0 33 28"><path d="M0 2a2 2 0 0 1 2-2h9l3 3h17a2 2 0 0 1 2 2v3H0z" fill="#e0a93a"/><path d="M0 6h31a2 2 0 0 1 2 2v17a2 2 0 0 1-2 2H2a2 2 0 0 1-2-2z" fill="#fcd462"/><path d="M6 27v-8a2 2 0 0 1 2-2h17a2 2 0 0 1 2 2v8h-5v-5H11v5z" fill="#3b8fd6"/></svg>
<!-- yandex -->
<svg class="a" style="left:314px;top:1032px" width="36" height="36" viewBox="0 0 24 24"><circle cx="12" cy="12" r="12" fill="#fc3f1d"/><path d="M12.9 19.6h2.3V4.5h-3.3C8.7 4.5 7.1 6.2 7.1 8.7c0 2 .9 3.2 2.6 4.3L6.8 19.6h2.5l2.8-6.2h.8zm0-8h-.8c-1.6 0-2.5-1-2.5-2.9 0-1.9.9-2.7 2.5-2.7h.8z" fill="#fff"/></svg>
<!-- Z app -->
<svg class="a" style="left:389px;top:1032px" width="36" height="36" viewBox="0 0 36 36"><circle cx="18" cy="18" r="17.8" fill="#2f8ff0"/><path d="M9.5 9h17l-5.5 9 5.5 9h-17l5.5-9z" fill="#fff"/><path d="M13.5 18h9" stroke="#2f8ff0" stroke-width="0"/></svg>
<!-- film star -->
<svg class="a" style="left:464px;top:1031px" width="37" height="37" viewBox="0 0 37 37"><rect width="37" height="37" fill="#0a0a0a"/><rect x="0" y="4" width="37" height="29" fill="#3a3d42"/><g fill="#fff"><rect x="2" y="1" width="2.5" height="2"/><rect x="7" y="1" width="2.5" height="2"/><rect x="12" y="1" width="2.5" height="2"/><rect x="17" y="1" width="2.5" height="2"/><rect x="22" y="1" width="2.5" height="2"/><rect x="27" y="1" width="2.5" height="2"/><rect x="32" y="1" width="2.5" height="2"/><rect x="2" y="34" width="2.5" height="2"/><rect x="7" y="34" width="2.5" height="2"/><rect x="12" y="34" width="2.5" height="2"/><rect x="17" y="34" width="2.5" height="2"/><rect x="22" y="34" width="2.5" height="2"/><rect x="27" y="34" width="2.5" height="2"/><rect x="32" y="34" width="2.5" height="2"/></g><path d="M18.5 6.5l3.3 7.3 8 .8-6 5.4 1.7 7.9-7-4-7 4 1.7-7.9-6-5.4 8-.8z" fill="#f4b934"/></svg>
<!-- zoom -->
<svg class="a" style="left:539px;top:1032px" width="36" height="36" viewBox="0 0 36 36"><defs><linearGradient id="zg" x1="0" y1="0" x2="0" y2="1"><stop offset="0" stop-color="#1a6dff"/><stop offset="1" stop-color="#0a4fd8"/></linearGradient></defs><path d="M18 0C32 0 36 4 36 18S32 36 18 36 0 32 0 18 4 0 18 0z" fill="url(#zg)"/><text x="18" y="21.5" text-anchor="middle" font-family="Liberation Sans" font-size="10" font-weight="bold" fill="#fff">zoom</text></svg>
<!-- telegram -->
<svg class="a" style="left:615px;top:1033px" width="34" height="34" viewBox="0 0 30 30"><defs><linearGradient id="tg" x1="0" y1="0" x2="0" y2="1"><stop offset="0" stop-color="#3aaee4"/><stop offset="1" stop-color="#1e92c8"/></linearGradient></defs><circle cx="15" cy="15" r="15" fill="url(#tg)"/><path d="M6.5 14.6l15.6-6.2c.7-.3 1.4.2 1.2 1.2l-2.7 12.6c-.2.9-.8 1.1-1.5.7l-4.2-3.1-2 2c-.2.2-.4.3-.8.3l.3-4.3 7.8-7c.3-.3-.1-.5-.5-.2L10.1 16.7 6 15.4c-.9-.3-.9-.9.5-.8z" fill="#fff"/></svg>
<!-- whatsapp -->
<svg class="a" style="left:687px;top:1030px" width="40" height="40" viewBox="0 0 40 40"><path d="M20 3.5A16.5 16.5 0 0 0 5.8 28.4L3.5 37l8.8-2.3A16.5 16.5 0 1 0 20 3.5z" fill="none" stroke="#1d7f60" stroke-width="3" stroke-linejoin="round"/><path d="M14.6 10.5c-.6 0-1.4.3-1.9 1-.6.7-1.2 1.9-.8 3.6.7 2.9 2.9 5.8 5.8 7.8 2.6 1.8 5 1.9 6.5 1.3 1-.5 1.6-1.4 1.7-2.2" fill="none" stroke="#1d7f60" stroke-width="2.8" stroke-linecap="round"/></svg>
<div class="a" style="left:713px;top:1049px;width:25px;height:25px;border-radius:50%;background:#d7d8da;border:1px solid #777"></div>
<div class="t" style="left:720px;top:1052px;font-size:17px;color:#000">6</div>
<div class="a" style="left:677px;top:1077px;width:61px;height:3px;background:#1f77d6"></div>
<!-- opera active -->
<div class="a" style="left:746px;top:1020px;width:73px;height:60px;background:#e97275"></div>
<div class="a" style="left:746px;top:1077px;width:73px;height:3px;background:#ff1424"></div>
<svg class="a" style="left:765px;top:1032px" width="34" height="36" viewBox="0 0 34 36"><defs><linearGradient id="og" x1="0" y1="0" x2="1" y2="1"><stop offset="0" stop-color="#ff1f2f"/><stop offset=".5" stop-color="#e01a2a"/><stop offset="1" stop-color="#b8142a"/></linearGradient></defs><ellipse cx="17" cy="18" rx="17" ry="17.8" fill="url(#og)"/><ellipse cx="17.3" cy="18.4" rx="8.5" ry="13.1" fill="#e97275"/></svg>
<!-- tray -->
<svg class="a" style="left:1468px;top:1040px" width="24" height="18" viewBox="0 0 24 18"><path d="M3 14L12 5l9 9" fill="none" stroke="#000" stroke-width="1.6"/></svg>
<svg class="a" style="left:1507px;top:1038px" width="20" height="24" viewBox="0 0 20 24"><g fill="none" stroke="#000" stroke-width="1.4"><rect x="2.5" y="7.5" width="9" height="9" rx="1.5"/><path d="M11.5 10.5l5-2.5v8l-5-2.5"/><path d="M3.5 3.2a9 9 0 0 1 11 0M3.5 20.8a9 9 0 0 0 11 0"/></g></svg>
<svg class="a" style="left:1538px;top:1040px" width="28" height="24" viewBox="0 0 28 24"><path d="M6 16.5a4.5 4.5 0 0 1 .6-9A6.5 6.5 0 0 1 18.8 6a4.5 4.5 0 0 1 2.7 8.4" fill="#8a8a8a" stroke="#222" stroke-width="1.2"/><circle cx="19" cy="16" r="7.2" fill="#e81123"/><path d="M16.3 13.3l5.4 5.4M21.7 13.3l-5.4 5.4" stroke="#fff" stroke-width="1.8"/></svg>
<svg class="a" style="left:1576px;top:1043px" width="26" height="16" viewBox="0 0 26 16"><rect x="1" y="1.5" width="20.5" height="12" fill="none" stroke="#000" stroke-width="1.4"/><rect x="3" y="3.5" width="14.5" height="8" fill="#000"/><rect x="22" y="5" width="2.2" height="5" fill="#000"/></svg>
<svg class="a" style="left:1614px;top:1040px" width="24" height="22" viewBox="0 0 24 22"><g fill="none" stroke="#000" stroke-width="1.4"><path d="M2 20.5A18 18 0 0 1 20.5 2"/><path d="M7 20.5A13.5 13.5 0 0 1 20.5 7"/><path d="M12 20.5A8.5 8.5 0 0 1 20.5 12"/></g><circle cx="19" cy="19" r="1.8" fill="#000"/></svg>
<svg class="a" style="left:1648px;top:1039px" width="26" height="22" viewBox="0 0 26 22"><g fill="none" stroke="#000" stroke-width="1.4"><path d="M1.5 8h4l6-5.5v17L5.5 14h-4z"/><path d="M14.5 8a4 4 0 0 1 0 6"/><path d="M17.5 5.5a7.5 7.5 0 0 1 0 11"/><path d="M20.5 3a11 11 0 0 1 0 16"/></g></svg>
<div class="t" style="left:1690px;top:1039.5px;font-size:18.5px;color:#000;transform:scaleX(.83);transform-origin:0 0">РУС</div>
<div class="t" style="left:1765px;top:1027px;font-size:18.3px;color:#000;transform:scaleX(.93);transform-origin:0 0">13:53</div>
<div class="t" style="left:1742px;top:1054px;font-size:18.3px;color:#000;transform:scaleX(.96);transform-origin:0 0">05.11.2024</div>
<svg class="a" style="left:1856px;top:1036px" width="40" height="40" viewBox="0 0 40 40"><path d="M2.5 2.5h23v19h-12l-6 6v-6h-5z" fill="#000"/><path d="M7 8h14M7 12h14M7 16h10" stroke="#fff" stroke-width="1.2"/><circle cx="25.5" cy="25.5" r="11.8" fill="#d7d8da" stroke="#777" stroke-width="1"/><text x="25.5" y="31.5" text-anchor="middle" font-family="Liberation Sans" font-size="17" fill="#000">2</text></svg>
<div class="a" style="left:1912px;top:1020px;width:1px;height:60px;background:#9aa4ad"></div>

</body></html>
